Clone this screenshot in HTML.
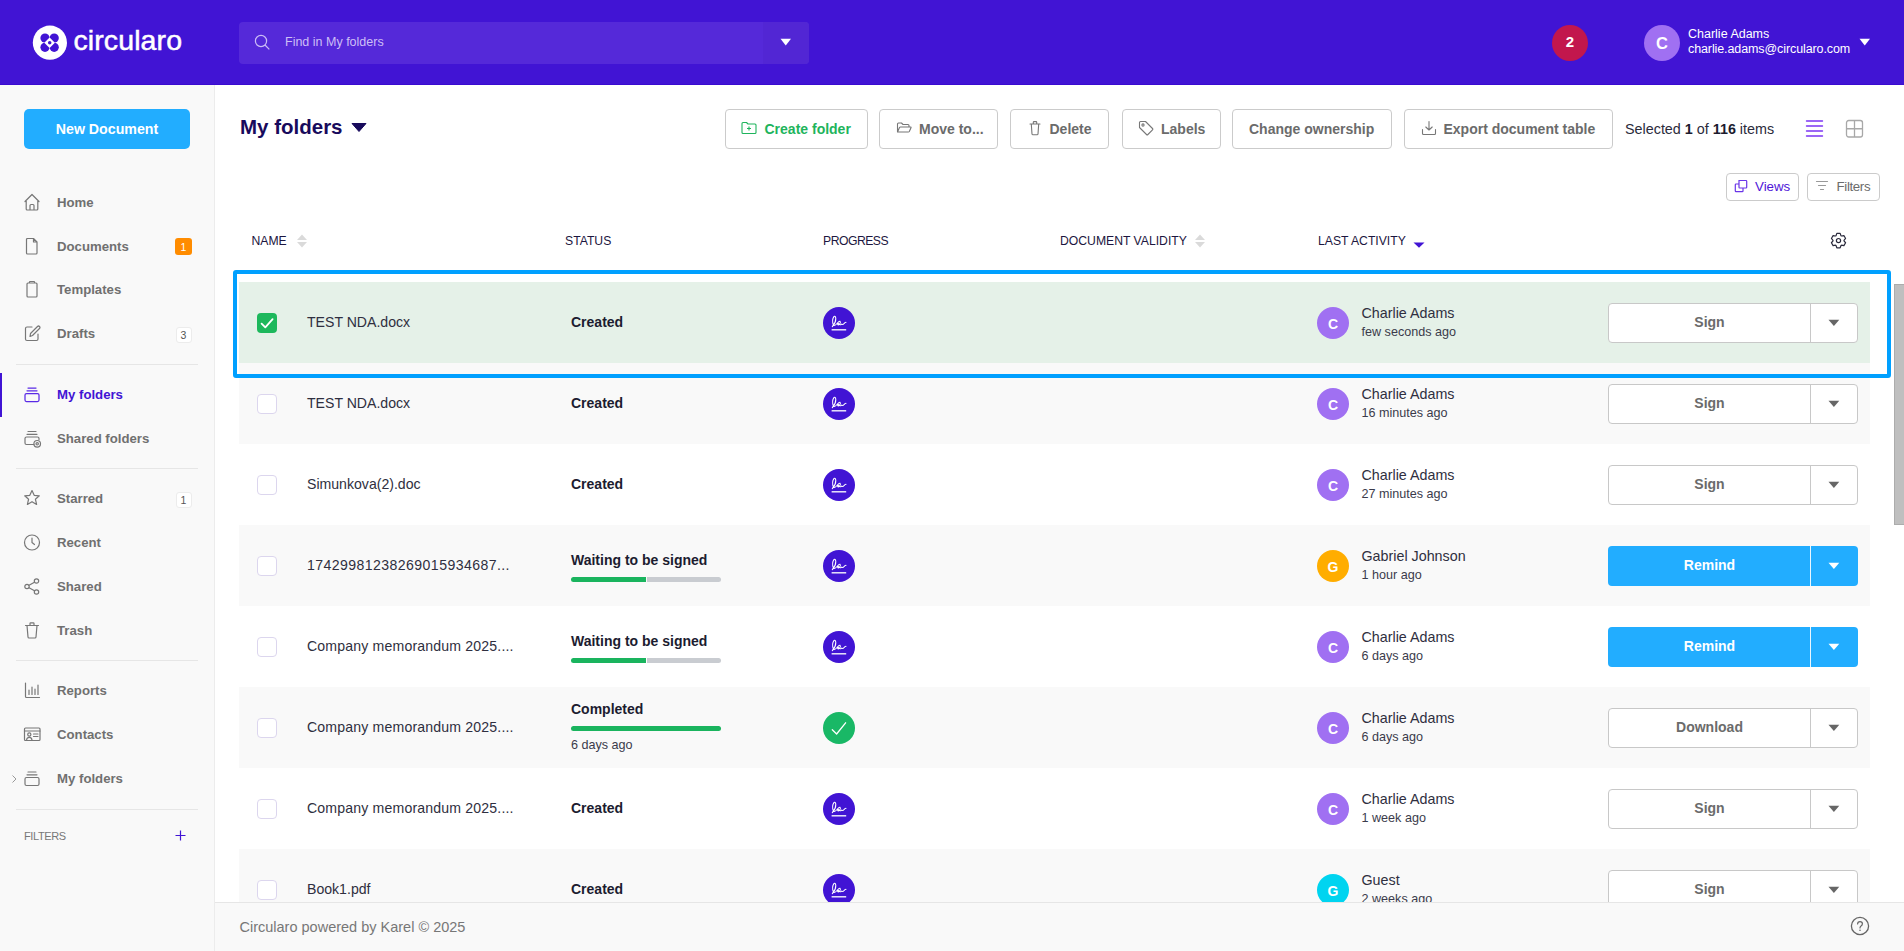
<!DOCTYPE html>
<html><head><meta charset="utf-8"><title>Circularo - My folders</title>
<style>
html,body{margin:0;padding:0;}
body{width:1904px;height:951px;overflow:hidden;position:relative;background:#fff;font-family:'Liberation Sans', sans-serif;}
.t{position:absolute;white-space:nowrap;line-height:1;}
svg{display:block;}
</style></head><body>
<div style="position:absolute;left:0px;top:0px;width:1904px;height:85px;background:#4114d4"></div>
<div style="position:absolute;left:0px;top:84px;width:1904px;height:1px;background:#3a0bd0"></div>
<svg style="position:absolute;left:30px;top:23px;" width="40" height="40" viewBox="0 0 40 40">
<circle cx="19.9" cy="19.7" r="17.1" fill="#fff"/>
<circle cx="15.0" cy="15.1" r="4.6" fill="#4114d4"/>
<circle cx="24.2" cy="15.1" r="4.6" fill="#4114d4"/>
<circle cx="15.0" cy="24.3" r="4.6" fill="#4114d4"/>
<circle cx="24.2" cy="24.3" r="4.6" fill="#4114d4"/>
<polygon points="19.6,14.4 14.3,19.7 19.6,25.0 24.9,19.7" fill="#fff"/>
<circle cx="19.7" cy="19.7" r="1.75" fill="#4114d4"/>
</svg>
<div class="t" style="left:73.50px;top:25.78px;font-size:28.5px;font-weight:400;color:#fff;letter-spacing:0.1px;-webkit-text-stroke:0.5px #fff">circularo</div>
<div style="position:absolute;left:239px;top:22px;width:570px;height:42px;background:#5529d9;border-radius:4px"></div>
<div style="position:absolute;left:763px;top:22px;width:46px;height:42px;background:#5226d4;border-radius:0 4px 4px 0"></div>
<svg style="position:absolute;left:253px;top:33px;" width="20" height="20" viewBox="0 0 20 20"><circle cx="8" cy="8" r="5.6" fill="none" stroke="#cbbcf6" stroke-width="1.2"/><line x1="12" y1="12" x2="16.3" y2="16.3" stroke="#cbbcf6" stroke-width="1.2"/></svg>
<div class="t" style="left:285.00px;top:36.38px;font-size:12.5px;font-weight:400;color:#cdbff6;">Find in My folders</div>
<svg style="position:absolute;left:780px;top:38px;" width="12" height="8" viewBox="0 0 12 8"><polygon points="0.5,0.8 11,0.8 5.75,7.4" fill="#fff"/></svg>
<div style="position:absolute;left:1552px;top:25px;width:36px;height:36px;background:#c2174d;border-radius:50%"></div>
<div class="t" style="left:1560.00px;width:20px;text-align:center;top:34.25px;font-size:15px;font-weight:700;color:#fff;">2</div>
<div style="position:absolute;left:1644px;top:25px;width:36px;height:36px;background:#a070f2;border-radius:50%"></div>
<div class="t" style="left:1652.00px;width:20px;text-align:center;top:34.98px;font-size:16.5px;font-weight:700;color:#fff;">C</div>
<div class="t" style="left:1688.00px;top:28.38px;font-size:12.5px;font-weight:400;color:#fff;">Charlie Adams</div>
<div class="t" style="left:1688.00px;top:43.38px;font-size:12.5px;font-weight:400;color:#fff;letter-spacing:-0.1px">charlie.adams@circularo.com</div>
<svg style="position:absolute;left:1859px;top:38px;" width="12" height="8" viewBox="0 0 12 8"><polygon points="0.5,0.8 11,0.8 5.75,7.4" fill="#fff"/></svg>
<div style="position:absolute;left:0px;top:85px;width:214px;height:866px;background:#f9f9f9"></div>
<div style="position:absolute;left:214px;top:85px;width:1px;height:866px;background:#ececec"></div>
<div style="position:absolute;left:24px;top:109px;width:166px;height:40px;background:#22adff;border-radius:5px"></div>
<div class="t" style="left:27.00px;width:160px;text-align:center;top:122.43px;font-size:14.2px;font-weight:700;color:#fff;">New Document</div>
<div class="t" style="left:57.00px;top:195.78px;font-size:13.2px;font-weight:700;color:#707070;">Home</div>
<svg style="position:absolute;left:22px;top:192px;" width="20" height="20" viewBox="0 0 20 20"><path d="M3 9.5 L10 2.5 L17 9.5 M4.2 8.3 V17 Q4.2 18 5.2 18 H14.8 Q15.8 18 15.8 17 V8.3 M8 18 V13.5 Q8 12.5 9 12.5 H11 Q12 12.5 12 13.5 V18" fill="none" stroke="#777" stroke-width="1.2" stroke-linejoin="round" stroke-linecap="round"/></svg>
<div class="t" style="left:57.00px;top:239.78px;font-size:13.2px;font-weight:700;color:#707070;">Documents</div>
<svg style="position:absolute;left:22px;top:236px;" width="20" height="20" viewBox="0 0 20 20"><path d="M5.5 2.5 H11.5 L15 6 V17 Q15 18 14 18 H5.5 Q4.5 18 4.5 17 V3.5 Q4.5 2.5 5.5 2.5 Z M11.5 2.5 V6 H15" fill="none" stroke="#777" stroke-width="1.2" stroke-linejoin="round" stroke-linecap="round"/></svg>
<div style="position:absolute;left:175px;top:238px;width:17px;height:17px;background:#ff8c00;border-radius:3px"></div>
<div class="t" style="left:177.50px;width:12px;text-align:center;top:242.07px;font-size:10.5px;font-weight:400;color:#fff;">1</div>
<div class="t" style="left:57.00px;top:282.78px;font-size:13.2px;font-weight:700;color:#707070;">Templates</div>
<svg style="position:absolute;left:22px;top:279px;" width="20" height="20" viewBox="0 0 20 20"><path d="M6 4 H14 Q15 4 15 5 V17 Q15 18 14 18 H6 Q5 18 5 17 V5 Q5 4 6 4 Z M7.5 4 V3 Q7.5 2.5 8 2.5 H12 Q12.5 2.5 12.5 3 V4" fill="none" stroke="#777" stroke-width="1.2" stroke-linejoin="round" stroke-linecap="round"/></svg>
<div class="t" style="left:57.00px;top:326.78px;font-size:13.2px;font-weight:700;color:#707070;">Drafts</div>
<svg style="position:absolute;left:22px;top:323px;" width="20" height="20" viewBox="0 0 20 20"><path d="M10 4 H5 Q3.5 4 3.5 5.5 V16 Q3.5 17.5 5 17.5 H14.5 Q16 17.5 16 16 V11 M8 13.5 L8.5 10.5 L15.5 3.5 Q16.5 2.5 17.5 3.5 Q18.5 4.5 17.5 5.5 L10.5 12.5 Z" fill="none" stroke="#777" stroke-width="1.2" stroke-linejoin="round" stroke-linecap="round"/></svg>
<div style="position:absolute;left:176px;top:327px;width:14px;height:14px;background:#fff;border:1px solid #ececec;border-radius:3px"></div>
<div class="t" style="left:177.50px;width:12px;text-align:center;top:329.57px;font-size:10.5px;font-weight:400;color:#555;">3</div>
<div style="position:absolute;left:16px;top:364px;width:182px;height:1px;background:#e6e6e6"></div>
<div style="position:absolute;left:0px;top:373px;width:2px;height:44px;background:#4114d4"></div>
<div class="t" style="left:57.00px;top:387.78px;font-size:13.2px;font-weight:700;color:#4114d4;">My folders</div>
<svg style="position:absolute;left:22px;top:384px;" width="20" height="20" viewBox="0 0 20 20"><path d="M6 4 H14 M5 6.8 H15 M4.5 9.5 H15.5 Q17 9.5 17 11 V16 Q17 17.5 15.5 17.5 H4.5 Q3 17.5 3 16 V11 Q3 9.5 4.5 9.5 Z" fill="none" stroke="#5a2ae6" stroke-width="1.25" stroke-linecap="round"/></svg>
<div class="t" style="left:57.00px;top:431.78px;font-size:13.2px;font-weight:700;color:#707070;">Shared folders</div>
<svg style="position:absolute;left:22px;top:428px;" width="20" height="20" viewBox="0 0 20 20"><path d="M6 3.5 H14 M5 6.3 H15 M12 16.5 H4.5 Q3 16.5 3 15 V10.5 Q3 9 4.5 9 H15.5 Q17 9 17 10.5 V11.5" fill="none" stroke="#777" stroke-width="1.2" stroke-linejoin="round" stroke-linecap="round"/><circle cx="15.2" cy="15.8" r="3.3" fill="none" stroke="#777" stroke-width="1.2" stroke-linejoin="round" stroke-linecap="round"/><circle cx="15.2" cy="15.8" r="1.2" fill="none" stroke="#777" stroke-width="1.2" stroke-linejoin="round" stroke-linecap="round"/></svg>
<div style="position:absolute;left:16px;top:468px;width:182px;height:1px;background:#e6e6e6"></div>
<div class="t" style="left:57.00px;top:491.78px;font-size:13.2px;font-weight:700;color:#707070;">Starred</div>
<svg style="position:absolute;left:22px;top:488px;" width="20" height="20" viewBox="0 0 20 20"><path d="M10 2.5 L12.2 7.3 L17.3 7.8 L13.4 11.2 L14.6 16.4 L10 13.7 L5.4 16.4 L6.6 11.2 L2.7 7.8 L7.8 7.3 Z" fill="none" stroke="#777" stroke-width="1.2" stroke-linejoin="round" stroke-linecap="round"/></svg>
<div style="position:absolute;left:176px;top:492px;width:14px;height:14px;background:#fff;border:1px solid #ececec;border-radius:3px"></div>
<div class="t" style="left:177.50px;width:12px;text-align:center;top:494.57px;font-size:10.5px;font-weight:400;color:#555;">1</div>
<div class="t" style="left:57.00px;top:535.78px;font-size:13.2px;font-weight:700;color:#707070;">Recent</div>
<svg style="position:absolute;left:22px;top:532px;" width="20" height="20" viewBox="0 0 20 20"><circle cx="10" cy="10.5" r="7.5" fill="none" stroke="#777" stroke-width="1.2" stroke-linejoin="round" stroke-linecap="round"/><path d="M10 6 V10.5 L12.5 12.5" fill="none" stroke="#777" stroke-width="1.2" stroke-linejoin="round" stroke-linecap="round"/></svg>
<div class="t" style="left:57.00px;top:579.78px;font-size:13.2px;font-weight:700;color:#707070;">Shared</div>
<svg style="position:absolute;left:22px;top:576px;" width="20" height="20" viewBox="0 0 20 20"><circle cx="5" cy="10.5" r="2.2" fill="none" stroke="#777" stroke-width="1.2" stroke-linejoin="round" stroke-linecap="round"/><circle cx="14.5" cy="5" r="2.2" fill="none" stroke="#777" stroke-width="1.2" stroke-linejoin="round" stroke-linecap="round"/><circle cx="14.5" cy="16" r="2.2" fill="none" stroke="#777" stroke-width="1.2" stroke-linejoin="round" stroke-linecap="round"/><path d="M7 9.3 L12.5 6.2 M7 11.7 L12.5 14.8" fill="none" stroke="#777" stroke-width="1.2" stroke-linejoin="round" stroke-linecap="round"/></svg>
<div class="t" style="left:57.00px;top:623.78px;font-size:13.2px;font-weight:700;color:#707070;">Trash</div>
<svg style="position:absolute;left:22px;top:620px;" width="20" height="20" viewBox="0 0 20 20"><path d="M3.5 5.5 H16.5 M5 5.5 L6 17 Q6.1 18 7 18 H13 Q13.9 18 14 17 L15 5.5 M8 5.5 V3.5 Q8 2.8 8.7 2.8 H11.3 Q12 2.8 12 3.5 V5.5" fill="none" stroke="#777" stroke-width="1.2" stroke-linejoin="round" stroke-linecap="round"/></svg>
<div style="position:absolute;left:16px;top:660px;width:182px;height:1px;background:#e6e6e6"></div>
<div class="t" style="left:57.00px;top:683.78px;font-size:13.2px;font-weight:700;color:#707070;">Reports</div>
<svg style="position:absolute;left:22px;top:680px;" width="20" height="20" viewBox="0 0 20 20"><path d="M3.5 3 V16.5 Q3.5 17.5 4.5 17.5 H17.5 M7 14.5 V10 M10 14.5 V7 M13 14.5 V9 M16 14.5 V5" fill="none" stroke="#777" stroke-width="1.2" stroke-linejoin="round" stroke-linecap="round"/></svg>
<div class="t" style="left:57.00px;top:727.78px;font-size:13.2px;font-weight:700;color:#707070;">Contacts</div>
<svg style="position:absolute;left:22px;top:724px;" width="20" height="20" viewBox="0 0 20 20"><rect x="2.5" y="4" width="15.5" height="12.5" rx="1" fill="none" stroke="#777" stroke-width="1.2" stroke-linejoin="round" stroke-linecap="round"/><path d="M2.5 7 H18" fill="none" stroke="#777" stroke-width="1.2" stroke-linejoin="round" stroke-linecap="round"/><circle cx="7.3" cy="10.5" r="1.6" fill="none" stroke="#777" stroke-width="1.2" stroke-linejoin="round" stroke-linecap="round"/><path d="M4.5 16 Q5 13.3 7.3 13.3 Q9.6 13.3 10 16 M11.5 10 H16 M11.5 12.5 H16" fill="none" stroke="#777" stroke-width="1.2" stroke-linejoin="round" stroke-linecap="round"/></svg>
<div class="t" style="left:57.00px;top:771.78px;font-size:13.2px;font-weight:700;color:#707070;">My folders</div>
<svg style="position:absolute;left:22px;top:768px;" width="20" height="20" viewBox="0 0 20 20"><path d="M6 4 H14 M5 6.8 H15 M4.5 9.5 H15.5 Q17 9.5 17 11 V16 Q17 17.5 15.5 17.5 H4.5 Q3 17.5 3 16 V11 Q3 9.5 4.5 9.5 Z" fill="none" stroke="#777" stroke-width="1.2" stroke-linecap="round"/></svg>
<svg style="position:absolute;left:10px;top:774px;" width="8" height="10" viewBox="0 0 8 10"><path d="M2.5 1.5 L6 5 L2.5 8.5" fill="none" stroke="#999" stroke-width="1"/></svg>
<div style="position:absolute;left:16px;top:809px;width:182px;height:1px;background:#e6e6e6"></div>
<div class="t" style="left:24.00px;top:830.65px;font-size:11px;font-weight:400;color:#777;letter-spacing:-0.4px">FILTERS</div>
<svg style="position:absolute;left:174px;top:829px;" width="13" height="13" viewBox="0 0 13 13"><path d="M6.5 1.5 V11.5 M1.5 6.5 H11.5" stroke="#4114d4" stroke-width="1.2"/></svg>
<div class="t" style="left:240.00px;top:116.58px;font-size:20.5px;font-weight:700;color:#180a5c;">My folders</div>
<svg style="position:absolute;left:351px;top:122px;" width="16" height="11" viewBox="0 0 16 11"><polygon points="1,1.5 15,1.5 8,9.5" fill="#180a5c" stroke="#180a5c" stroke-width="1" stroke-linejoin="round"/></svg>
<div style="position:absolute;left:725px;top:109px;width:141px;height:38px;border:1px solid #cbcbcb;border-radius:4px;background:#fff"></div>
<div class="t" style="left:764.50px;top:122.10px;font-size:14px;font-weight:700;color:#1eb45c;">Create folder</div>
<svg style="position:absolute;left:740px;top:119px;" width="18" height="18" viewBox="0 0 18 18"><path d="M2 4.5 Q2 3.5 3 3.5 H6.5 L8 5 H15 Q16 5 16 6 V13.5 Q16 14.5 15 14.5 H3 Q2 14.5 2 13.5 Z M9 7.5 V11.5 M7 9.5 H11" fill="none" stroke="#1eb45c" stroke-width="1.1" stroke-linejoin="round"/></svg>
<div style="position:absolute;left:879px;top:109px;width:117px;height:38px;border:1px solid #cbcbcb;border-radius:4px;background:#fff"></div>
<div class="t" style="left:919.00px;top:122.10px;font-size:14px;font-weight:700;color:#6b6b6b;">Move to...</div>
<svg style="position:absolute;left:895px;top:119px;" width="18" height="18" viewBox="0 0 18 18"><path d="M2.5 13 V5 Q2.5 4 3.5 4 H6.5 L8 5.5 H13 Q14 5.5 14 6.5 V8 M2.5 13 L4.5 8.5 Q4.8 8 5.5 8 H15.5 Q16.3 8 16 8.7 L14.3 12.5 Q14 13 13.3 13 Z" fill="none" stroke="#777" stroke-width="1.1" stroke-linejoin="round" stroke-linecap="round"/></svg>
<div style="position:absolute;left:1010px;top:109px;width:97px;height:38px;border:1px solid #cbcbcb;border-radius:4px;background:#fff"></div>
<div class="t" style="left:1049.50px;top:122.10px;font-size:14px;font-weight:700;color:#6b6b6b;">Delete</div>
<svg style="position:absolute;left:1026px;top:119px;" width="18" height="18" viewBox="0 0 18 18"><path d="M4 5 H14 M5.3 5 L6 15 Q6.1 15.8 7 15.8 H11 Q11.9 15.8 12 15 L12.7 5 M7.3 5 V3.3 Q7.3 2.6 8 2.6 H10 Q10.7 2.6 10.7 3.3 V5" fill="none" stroke="#777" stroke-width="1.1" stroke-linejoin="round" stroke-linecap="round"/></svg>
<div style="position:absolute;left:1122px;top:109px;width:97px;height:38px;border:1px solid #cbcbcb;border-radius:4px;background:#fff"></div>
<div class="t" style="left:1161.00px;top:122.10px;font-size:14px;font-weight:700;color:#6b6b6b;">Labels</div>
<svg style="position:absolute;left:1137px;top:119px;" width="18" height="18" viewBox="0 0 18 18"><path d="M2.5 3.5 Q2.5 2.5 3.5 2.5 H8.5 L15.5 9.5 Q16.2 10.2 15.5 10.9 L10.9 15.5 Q10.2 16.2 9.5 15.5 L2.5 8.5 Z" fill="none" stroke="#777" stroke-width="1.1" stroke-linejoin="round" stroke-linecap="round"/><circle cx="6" cy="6" r="1.1" fill="none" stroke="#777" stroke-width="1.1" stroke-linejoin="round" stroke-linecap="round"/></svg>
<div style="position:absolute;left:1232px;top:109px;width:158px;height:38px;border:1px solid #cbcbcb;border-radius:4px;background:#fff"></div>
<div class="t" style="left:1249.00px;top:122.10px;font-size:14px;font-weight:700;color:#6b6b6b;">Change ownership</div>
<svg style="position:absolute;left:0px;top:119px;" width="18" height="18" viewBox="0 0 18 18"></svg>
<div style="position:absolute;left:1404px;top:109px;width:207px;height:38px;border:1px solid #cbcbcb;border-radius:4px;background:#fff"></div>
<div class="t" style="left:1443.50px;top:122.10px;font-size:14px;font-weight:700;color:#6b6b6b;">Export document table</div>
<svg style="position:absolute;left:1420px;top:119px;" width="18" height="18" viewBox="0 0 18 18"><path d="M9 2.5 V11 M5.8 8 L9 11 L12.2 8 M2.5 10.5 V14.5 Q2.5 15.5 3.5 15.5 H14.5 Q15.5 15.5 15.5 14.5 V10.5" fill="none" stroke="#777" stroke-width="1.1" stroke-linejoin="round" stroke-linecap="round"/></svg>
<div class="t" style="left:1625px;top:122.10px;font-size:14.35px;color:#2b2b3b">Selected <b style="color:#1c1c2e">1</b> of <b style="color:#1c1c2e">116</b> items</div>
<svg style="position:absolute;left:1804px;top:118px;" width="20" height="20" viewBox="0 0 20 20"><path d="M2.5 3 H18.5 M2.5 8 H18.5 M2.5 13 H18.5 M2.5 18 H18.5" stroke="#7b35f2" stroke-width="1.4" stroke-linecap="round"/></svg>
<svg style="position:absolute;left:1844px;top:118px;" width="20" height="20" viewBox="0 0 20 20"><rect x="2.5" y="2.5" width="16" height="16.5" rx="2.2" fill="none" stroke="#a8a8a8" stroke-width="1.3"/><path d="M10.5 2.5 V19 M2.5 10.75 H18.5" stroke="#a8a8a8" stroke-width="1.3"/></svg>
<div style="position:absolute;left:1726px;top:173px;width:71px;height:26px;border:1px solid #cbcbcb;border-radius:4px;background:#fff"></div>
<svg style="position:absolute;left:1733px;top:178px;" width="16" height="16" viewBox="0 0 16 16"><path d="M6 2.5 H13 Q13.7 2.5 13.7 3.2 V9.3 Q13.7 10 13 10 H6.7 Q6 10 6 9.3 Z M6 6 H3 Q2.3 6 2.3 6.7 V13 Q2.3 13.7 3 13.7 H9.3 Q10 13.7 10 13 V10" fill="none" stroke="#6a35e8" stroke-width="1.2"/></svg>
<div class="t" style="left:1755.00px;top:179.69px;font-size:13.3px;font-weight:400;color:#5016d8;">Views</div>
<div style="position:absolute;left:1807px;top:173px;width:71px;height:26px;border:1px solid #cbcbcb;border-radius:4px;background:#fff"></div>
<svg style="position:absolute;left:1814px;top:178px;" width="16" height="16" viewBox="0 0 16 16"><path d="M2.5 3.5 H13.5 M4.5 7.5 H11.5 M6.5 11.5 H9.5" stroke="#999" stroke-width="1.2" stroke-linecap="round"/></svg>
<div class="t" style="left:1836.50px;top:179.69px;font-size:13.3px;font-weight:400;color:#6b6b6b;letter-spacing:-0.35px">Filters</div>
<div class="t" style="left:251.50px;top:234.63px;font-size:12.2px;font-weight:400;color:#1c1640;">NAME</div>
<div class="t" style="left:565.00px;top:234.63px;font-size:12.2px;font-weight:400;color:#1c1640;">STATUS</div>
<div class="t" style="left:823.00px;top:234.63px;font-size:12.2px;font-weight:400;color:#1c1640;letter-spacing:-0.5px">PROGRESS</div>
<div class="t" style="left:1060.00px;top:234.63px;font-size:12.2px;font-weight:400;color:#1c1640;">DOCUMENT VALIDITY</div>
<div class="t" style="left:1318.00px;top:234.63px;font-size:12.2px;font-weight:400;color:#1c1640;">LAST ACTIVITY</div>
<svg style="position:absolute;left:297px;top:234px;" width="10" height="14" viewBox="0 0 10 14"><polygon points="5,0.5 10,6 0,6" fill="#dadada"/><polygon points="0,8 10,8 5,13.5" fill="#dadada"/></svg>
<svg style="position:absolute;left:1195px;top:234px;" width="10" height="14" viewBox="0 0 10 14"><polygon points="5,0.5 10,6 0,6" fill="#dadada"/><polygon points="0,8 10,8 5,13.5" fill="#dadada"/></svg>
<svg style="position:absolute;left:1413px;top:242px;" width="12" height="6" viewBox="0 0 12 6"><polygon points="0.5,0.5 11.5,0.5 6,5.8" fill="#4114d4"/></svg>
<svg style="position:absolute;left:1830px;top:232px;" width="17" height="17" viewBox="0 0 17 17"><path d="M6.00 3.70 L6.84 1.39 L10.16 1.39 L11.00 3.70 L11.50 3.99 L13.91 3.55 L15.58 6.44 L13.99 8.31 L13.99 8.89 L15.58 10.76 L13.91 13.65 L11.50 13.21 L11.00 13.50 L10.16 15.81 L6.84 15.81 L6.00 13.50 L5.50 13.21 L3.09 13.65 L1.42 10.76 L3.01 8.89 L3.01 8.31 L1.42 6.44 L3.09 3.55 L5.50 3.99 Z" fill="none" stroke="#2a2a3c" stroke-width="1.2" stroke-linejoin="round"/><circle cx="8.5" cy="8.6" r="2.1" fill="none" stroke="#2a2a3c" stroke-width="1.2"/></svg>
<div style="position:absolute;left:239px;top:282px;width:1631px;height:81px;background:#e5f1e8"></div>
<div style="position:absolute;left:257px;top:313px;width:20px;height:20px;background:#1db85c;border-radius:4px"></div>
<svg style="position:absolute;left:257px;top:313px;" width="20" height="20" viewBox="0 0 20 20"><path d="M4.6 10.6 L8.3 14.3 L15.6 6.2" fill="none" stroke="#fff" stroke-width="1.8" stroke-linecap="round" stroke-linejoin="round"/></svg>
<div class="t" style="left:307.00px;top:315.01px;font-size:14.1px;font-weight:400;color:#2f2f40;">TEST NDA.docx</div>
<div class="t" style="left:571.00px;top:315.10px;font-size:14px;font-weight:700;color:#1c1c30;">Created</div>
<div style="position:absolute;left:823px;top:307px;width:32px;height:32px;background:#4114d4;border-radius:50%"></div>
<svg style="position:absolute;left:823px;top:307px;" width="32" height="32" viewBox="0 0 32 32"><path d="M9.3 19.7 C10.8 18.0 12.9 14.5 12.8 11.5 C12.7 9.5 11.6 8.6 10.9 9.6 C9.6 11.5 9.4 15.5 10.5 18.2 C11.3 19.0 12.6 18.0 13.6 17.0 C14.6 16.0 16.0 13.6 17.0 14.3 C17.9 15.0 17.0 17.2 15.8 17.8 C14.6 18.2 14.2 16.8 15.2 16.4 C16.6 17.8 18.0 18.2 18.8 17.0 C19.4 17.8 20.4 17.6 21.0 16.6 C21.6 15.8 22.3 15.3 23.0 15.2" fill="none" stroke="#fff" stroke-width="1.05" stroke-linecap="round" stroke-linejoin="round"/><path d="M8.6 22.8 H23.2" stroke="#fff" stroke-width="1.4" opacity="0.95"/></svg>
<div style="position:absolute;left:1317px;top:307px;width:32px;height:32px;background:#a070f2;border-radius:50%"></div>
<div class="t" style="left:1323.00px;width:20px;text-align:center;top:316.60px;font-size:14px;font-weight:700;color:#fff;">C</div>
<div class="t" style="left:1361.50px;top:305.85px;font-size:14.3px;font-weight:400;color:#2f2f40;">Charlie Adams</div>
<div class="t" style="left:1361.50px;top:325.79px;font-size:12.6px;font-weight:400;color:#3b3b4b;">few seconds ago</div>
<div style="position:absolute;left:1608px;top:303px;width:248px;height:38px;background:#fff;border:1px solid #c8c8c8;border-radius:4px"></div>
<div style="position:absolute;left:1810px;top:303px;width:1px;height:40px;background:#c8c8c8"></div>
<div class="t" style="left:1649.50px;width:120px;text-align:center;top:315.10px;font-size:14px;font-weight:700;color:#6b6b6b;">Sign</div>
<svg style="position:absolute;left:1828px;top:319px;" width="12" height="8" viewBox="0 0 12 8"><polygon points="0.5,0.8 11.3,0.8 5.9,6.9" fill="#666"/></svg>
<div style="position:absolute;left:239px;top:363px;width:1631px;height:81px;background:#f9f9f9"></div>
<div style="position:absolute;left:257px;top:394px;width:18px;height:18px;background:#fff;border:1px solid #dcd6ee;border-radius:4px"></div>
<div class="t" style="left:307.00px;top:396.01px;font-size:14.1px;font-weight:400;color:#2f2f40;">TEST NDA.docx</div>
<div class="t" style="left:571.00px;top:396.10px;font-size:14px;font-weight:700;color:#1c1c30;">Created</div>
<div style="position:absolute;left:823px;top:388px;width:32px;height:32px;background:#4114d4;border-radius:50%"></div>
<svg style="position:absolute;left:823px;top:388px;" width="32" height="32" viewBox="0 0 32 32"><path d="M9.3 19.7 C10.8 18.0 12.9 14.5 12.8 11.5 C12.7 9.5 11.6 8.6 10.9 9.6 C9.6 11.5 9.4 15.5 10.5 18.2 C11.3 19.0 12.6 18.0 13.6 17.0 C14.6 16.0 16.0 13.6 17.0 14.3 C17.9 15.0 17.0 17.2 15.8 17.8 C14.6 18.2 14.2 16.8 15.2 16.4 C16.6 17.8 18.0 18.2 18.8 17.0 C19.4 17.8 20.4 17.6 21.0 16.6 C21.6 15.8 22.3 15.3 23.0 15.2" fill="none" stroke="#fff" stroke-width="1.05" stroke-linecap="round" stroke-linejoin="round"/><path d="M8.6 22.8 H23.2" stroke="#fff" stroke-width="1.4" opacity="0.95"/></svg>
<div style="position:absolute;left:1317px;top:388px;width:32px;height:32px;background:#a070f2;border-radius:50%"></div>
<div class="t" style="left:1323.00px;width:20px;text-align:center;top:397.60px;font-size:14px;font-weight:700;color:#fff;">C</div>
<div class="t" style="left:1361.50px;top:386.85px;font-size:14.3px;font-weight:400;color:#2f2f40;">Charlie Adams</div>
<div class="t" style="left:1361.50px;top:406.79px;font-size:12.6px;font-weight:400;color:#3b3b4b;">16 minutes ago</div>
<div style="position:absolute;left:1608px;top:384px;width:248px;height:38px;background:#fff;border:1px solid #c8c8c8;border-radius:4px"></div>
<div style="position:absolute;left:1810px;top:384px;width:1px;height:40px;background:#c8c8c8"></div>
<div class="t" style="left:1649.50px;width:120px;text-align:center;top:396.10px;font-size:14px;font-weight:700;color:#6b6b6b;">Sign</div>
<svg style="position:absolute;left:1828px;top:400px;" width="12" height="8" viewBox="0 0 12 8"><polygon points="0.5,0.8 11.3,0.8 5.9,6.9" fill="#666"/></svg>
<div style="position:absolute;left:239px;top:444px;width:1631px;height:81px;background:#ffffff"></div>
<div style="position:absolute;left:257px;top:475px;width:18px;height:18px;background:#fff;border:1px solid #dcd6ee;border-radius:4px"></div>
<div class="t" style="left:307.00px;top:477.01px;font-size:14.1px;font-weight:400;color:#2f2f40;">Simunkova(2).doc</div>
<div class="t" style="left:571.00px;top:477.10px;font-size:14px;font-weight:700;color:#1c1c30;">Created</div>
<div style="position:absolute;left:823px;top:469px;width:32px;height:32px;background:#4114d4;border-radius:50%"></div>
<svg style="position:absolute;left:823px;top:469px;" width="32" height="32" viewBox="0 0 32 32"><path d="M9.3 19.7 C10.8 18.0 12.9 14.5 12.8 11.5 C12.7 9.5 11.6 8.6 10.9 9.6 C9.6 11.5 9.4 15.5 10.5 18.2 C11.3 19.0 12.6 18.0 13.6 17.0 C14.6 16.0 16.0 13.6 17.0 14.3 C17.9 15.0 17.0 17.2 15.8 17.8 C14.6 18.2 14.2 16.8 15.2 16.4 C16.6 17.8 18.0 18.2 18.8 17.0 C19.4 17.8 20.4 17.6 21.0 16.6 C21.6 15.8 22.3 15.3 23.0 15.2" fill="none" stroke="#fff" stroke-width="1.05" stroke-linecap="round" stroke-linejoin="round"/><path d="M8.6 22.8 H23.2" stroke="#fff" stroke-width="1.4" opacity="0.95"/></svg>
<div style="position:absolute;left:1317px;top:469px;width:32px;height:32px;background:#a070f2;border-radius:50%"></div>
<div class="t" style="left:1323.00px;width:20px;text-align:center;top:478.60px;font-size:14px;font-weight:700;color:#fff;">C</div>
<div class="t" style="left:1361.50px;top:467.85px;font-size:14.3px;font-weight:400;color:#2f2f40;">Charlie Adams</div>
<div class="t" style="left:1361.50px;top:487.79px;font-size:12.6px;font-weight:400;color:#3b3b4b;">27 minutes ago</div>
<div style="position:absolute;left:1608px;top:465px;width:248px;height:38px;background:#fff;border:1px solid #c8c8c8;border-radius:4px"></div>
<div style="position:absolute;left:1810px;top:465px;width:1px;height:40px;background:#c8c8c8"></div>
<div class="t" style="left:1649.50px;width:120px;text-align:center;top:477.10px;font-size:14px;font-weight:700;color:#6b6b6b;">Sign</div>
<svg style="position:absolute;left:1828px;top:481px;" width="12" height="8" viewBox="0 0 12 8"><polygon points="0.5,0.8 11.3,0.8 5.9,6.9" fill="#666"/></svg>
<div style="position:absolute;left:239px;top:525px;width:1631px;height:81px;background:#f9f9f9"></div>
<div style="position:absolute;left:257px;top:556px;width:18px;height:18px;background:#fff;border:1px solid #dcd6ee;border-radius:4px"></div>
<div class="t" style="left:307.00px;top:558.01px;font-size:14.1px;font-weight:400;color:#2f2f40;letter-spacing:0.42px">17429981238269015934687...</div>
<div class="t" style="left:571.00px;top:553.10px;font-size:14px;font-weight:700;color:#1c1c30;">Waiting to be signed</div>
<div style="position:absolute;left:571px;top:577px;width:75px;height:5px;background:#1ab45e;border-radius:3px 0 0 3px"></div>
<div style="position:absolute;left:647px;top:577px;width:74px;height:5px;background:#c9ccd1;border-radius:0 3px 3px 0"></div>
<div style="position:absolute;left:823px;top:550px;width:32px;height:32px;background:#4114d4;border-radius:50%"></div>
<svg style="position:absolute;left:823px;top:550px;" width="32" height="32" viewBox="0 0 32 32"><path d="M9.3 19.7 C10.8 18.0 12.9 14.5 12.8 11.5 C12.7 9.5 11.6 8.6 10.9 9.6 C9.6 11.5 9.4 15.5 10.5 18.2 C11.3 19.0 12.6 18.0 13.6 17.0 C14.6 16.0 16.0 13.6 17.0 14.3 C17.9 15.0 17.0 17.2 15.8 17.8 C14.6 18.2 14.2 16.8 15.2 16.4 C16.6 17.8 18.0 18.2 18.8 17.0 C19.4 17.8 20.4 17.6 21.0 16.6 C21.6 15.8 22.3 15.3 23.0 15.2" fill="none" stroke="#fff" stroke-width="1.05" stroke-linecap="round" stroke-linejoin="round"/><path d="M8.6 22.8 H23.2" stroke="#fff" stroke-width="1.4" opacity="0.95"/></svg>
<div style="position:absolute;left:1317px;top:550px;width:32px;height:32px;background:#ffad00;border-radius:50%"></div>
<div class="t" style="left:1323.00px;width:20px;text-align:center;top:559.60px;font-size:14px;font-weight:700;color:#fff;">G</div>
<div class="t" style="left:1361.50px;top:548.85px;font-size:14.3px;font-weight:400;color:#2f2f40;">Gabriel Johnson</div>
<div class="t" style="left:1361.50px;top:568.79px;font-size:12.6px;font-weight:400;color:#3b3b4b;">1 hour ago</div>
<div style="position:absolute;left:1608px;top:546px;width:250px;height:40px;background:#22adff;border-radius:4px"></div>
<div style="position:absolute;left:1810px;top:546px;width:1px;height:40px;background:#e8f6ff"></div>
<div class="t" style="left:1649.50px;width:120px;text-align:center;top:558.10px;font-size:14px;font-weight:700;color:#fff;">Remind</div>
<svg style="position:absolute;left:1828px;top:562px;" width="12" height="8" viewBox="0 0 12 8"><polygon points="0.5,0.8 11.3,0.8 5.9,6.9" fill="#fff"/></svg>
<div style="position:absolute;left:239px;top:606px;width:1631px;height:81px;background:#ffffff"></div>
<div style="position:absolute;left:257px;top:637px;width:18px;height:18px;background:#fff;border:1px solid #dcd6ee;border-radius:4px"></div>
<div class="t" style="left:307.00px;top:639.01px;font-size:14.1px;font-weight:400;color:#2f2f40;letter-spacing:0.17px">Company memorandum 2025....</div>
<div class="t" style="left:571.00px;top:634.10px;font-size:14px;font-weight:700;color:#1c1c30;">Waiting to be signed</div>
<div style="position:absolute;left:571px;top:658px;width:75px;height:5px;background:#1ab45e;border-radius:3px 0 0 3px"></div>
<div style="position:absolute;left:647px;top:658px;width:74px;height:5px;background:#c9ccd1;border-radius:0 3px 3px 0"></div>
<div style="position:absolute;left:823px;top:631px;width:32px;height:32px;background:#4114d4;border-radius:50%"></div>
<svg style="position:absolute;left:823px;top:631px;" width="32" height="32" viewBox="0 0 32 32"><path d="M9.3 19.7 C10.8 18.0 12.9 14.5 12.8 11.5 C12.7 9.5 11.6 8.6 10.9 9.6 C9.6 11.5 9.4 15.5 10.5 18.2 C11.3 19.0 12.6 18.0 13.6 17.0 C14.6 16.0 16.0 13.6 17.0 14.3 C17.9 15.0 17.0 17.2 15.8 17.8 C14.6 18.2 14.2 16.8 15.2 16.4 C16.6 17.8 18.0 18.2 18.8 17.0 C19.4 17.8 20.4 17.6 21.0 16.6 C21.6 15.8 22.3 15.3 23.0 15.2" fill="none" stroke="#fff" stroke-width="1.05" stroke-linecap="round" stroke-linejoin="round"/><path d="M8.6 22.8 H23.2" stroke="#fff" stroke-width="1.4" opacity="0.95"/></svg>
<div style="position:absolute;left:1317px;top:631px;width:32px;height:32px;background:#a070f2;border-radius:50%"></div>
<div class="t" style="left:1323.00px;width:20px;text-align:center;top:640.60px;font-size:14px;font-weight:700;color:#fff;">C</div>
<div class="t" style="left:1361.50px;top:629.85px;font-size:14.3px;font-weight:400;color:#2f2f40;">Charlie Adams</div>
<div class="t" style="left:1361.50px;top:649.79px;font-size:12.6px;font-weight:400;color:#3b3b4b;">6 days ago</div>
<div style="position:absolute;left:1608px;top:627px;width:250px;height:40px;background:#22adff;border-radius:4px"></div>
<div style="position:absolute;left:1810px;top:627px;width:1px;height:40px;background:#e8f6ff"></div>
<div class="t" style="left:1649.50px;width:120px;text-align:center;top:639.10px;font-size:14px;font-weight:700;color:#fff;">Remind</div>
<svg style="position:absolute;left:1828px;top:643px;" width="12" height="8" viewBox="0 0 12 8"><polygon points="0.5,0.8 11.3,0.8 5.9,6.9" fill="#fff"/></svg>
<div style="position:absolute;left:239px;top:687px;width:1631px;height:81px;background:#f9f9f9"></div>
<div style="position:absolute;left:257px;top:718px;width:18px;height:18px;background:#fff;border:1px solid #dcd6ee;border-radius:4px"></div>
<div class="t" style="left:307.00px;top:720.01px;font-size:14.1px;font-weight:400;color:#2f2f40;letter-spacing:0.17px">Company memorandum 2025....</div>
<div class="t" style="left:571.00px;top:702.10px;font-size:14px;font-weight:700;color:#1c1c30;">Completed</div>
<div style="position:absolute;left:571px;top:726px;width:150px;height:5px;background:#1ab45e;border-radius:3px"></div>
<div class="t" style="left:571.00px;top:739.29px;font-size:12.6px;font-weight:400;color:#3b3b4b;">6 days ago</div>
<div style="position:absolute;left:823px;top:712px;width:32px;height:32px;background:#19b866;border-radius:50%"></div>
<svg style="position:absolute;left:823px;top:712px;" width="32" height="32" viewBox="0 0 32 32"><path d="M9.3 17.8 L13.6 22 L22.6 10.8" fill="none" stroke="#fff" stroke-width="1.3" stroke-linecap="round" stroke-linejoin="round"/></svg>
<div style="position:absolute;left:1317px;top:712px;width:32px;height:32px;background:#a070f2;border-radius:50%"></div>
<div class="t" style="left:1323.00px;width:20px;text-align:center;top:721.60px;font-size:14px;font-weight:700;color:#fff;">C</div>
<div class="t" style="left:1361.50px;top:710.85px;font-size:14.3px;font-weight:400;color:#2f2f40;">Charlie Adams</div>
<div class="t" style="left:1361.50px;top:730.79px;font-size:12.6px;font-weight:400;color:#3b3b4b;">6 days ago</div>
<div style="position:absolute;left:1608px;top:708px;width:248px;height:38px;background:#fff;border:1px solid #c8c8c8;border-radius:4px"></div>
<div style="position:absolute;left:1810px;top:708px;width:1px;height:40px;background:#c8c8c8"></div>
<div class="t" style="left:1649.50px;width:120px;text-align:center;top:720.10px;font-size:14px;font-weight:700;color:#6b6b6b;">Download</div>
<svg style="position:absolute;left:1828px;top:724px;" width="12" height="8" viewBox="0 0 12 8"><polygon points="0.5,0.8 11.3,0.8 5.9,6.9" fill="#666"/></svg>
<div style="position:absolute;left:239px;top:768px;width:1631px;height:81px;background:#ffffff"></div>
<div style="position:absolute;left:257px;top:799px;width:18px;height:18px;background:#fff;border:1px solid #dcd6ee;border-radius:4px"></div>
<div class="t" style="left:307.00px;top:801.01px;font-size:14.1px;font-weight:400;color:#2f2f40;letter-spacing:0.17px">Company memorandum 2025....</div>
<div class="t" style="left:571.00px;top:801.10px;font-size:14px;font-weight:700;color:#1c1c30;">Created</div>
<div style="position:absolute;left:823px;top:793px;width:32px;height:32px;background:#4114d4;border-radius:50%"></div>
<svg style="position:absolute;left:823px;top:793px;" width="32" height="32" viewBox="0 0 32 32"><path d="M9.3 19.7 C10.8 18.0 12.9 14.5 12.8 11.5 C12.7 9.5 11.6 8.6 10.9 9.6 C9.6 11.5 9.4 15.5 10.5 18.2 C11.3 19.0 12.6 18.0 13.6 17.0 C14.6 16.0 16.0 13.6 17.0 14.3 C17.9 15.0 17.0 17.2 15.8 17.8 C14.6 18.2 14.2 16.8 15.2 16.4 C16.6 17.8 18.0 18.2 18.8 17.0 C19.4 17.8 20.4 17.6 21.0 16.6 C21.6 15.8 22.3 15.3 23.0 15.2" fill="none" stroke="#fff" stroke-width="1.05" stroke-linecap="round" stroke-linejoin="round"/><path d="M8.6 22.8 H23.2" stroke="#fff" stroke-width="1.4" opacity="0.95"/></svg>
<div style="position:absolute;left:1317px;top:793px;width:32px;height:32px;background:#a070f2;border-radius:50%"></div>
<div class="t" style="left:1323.00px;width:20px;text-align:center;top:802.60px;font-size:14px;font-weight:700;color:#fff;">C</div>
<div class="t" style="left:1361.50px;top:791.85px;font-size:14.3px;font-weight:400;color:#2f2f40;">Charlie Adams</div>
<div class="t" style="left:1361.50px;top:811.79px;font-size:12.6px;font-weight:400;color:#3b3b4b;">1 week ago</div>
<div style="position:absolute;left:1608px;top:789px;width:248px;height:38px;background:#fff;border:1px solid #c8c8c8;border-radius:4px"></div>
<div style="position:absolute;left:1810px;top:789px;width:1px;height:40px;background:#c8c8c8"></div>
<div class="t" style="left:1649.50px;width:120px;text-align:center;top:801.10px;font-size:14px;font-weight:700;color:#6b6b6b;">Sign</div>
<svg style="position:absolute;left:1828px;top:805px;" width="12" height="8" viewBox="0 0 12 8"><polygon points="0.5,0.8 11.3,0.8 5.9,6.9" fill="#666"/></svg>
<div style="position:absolute;left:239px;top:849px;width:1631px;height:81px;background:#f9f9f9"></div>
<div style="position:absolute;left:257px;top:880px;width:18px;height:18px;background:#fff;border:1px solid #dcd6ee;border-radius:4px"></div>
<div class="t" style="left:307.00px;top:882.01px;font-size:14.1px;font-weight:400;color:#2f2f40;">Book1.pdf</div>
<div class="t" style="left:571.00px;top:882.10px;font-size:14px;font-weight:700;color:#1c1c30;">Created</div>
<div style="position:absolute;left:823px;top:874px;width:32px;height:32px;background:#4114d4;border-radius:50%"></div>
<svg style="position:absolute;left:823px;top:874px;" width="32" height="32" viewBox="0 0 32 32"><path d="M9.3 19.7 C10.8 18.0 12.9 14.5 12.8 11.5 C12.7 9.5 11.6 8.6 10.9 9.6 C9.6 11.5 9.4 15.5 10.5 18.2 C11.3 19.0 12.6 18.0 13.6 17.0 C14.6 16.0 16.0 13.6 17.0 14.3 C17.9 15.0 17.0 17.2 15.8 17.8 C14.6 18.2 14.2 16.8 15.2 16.4 C16.6 17.8 18.0 18.2 18.8 17.0 C19.4 17.8 20.4 17.6 21.0 16.6 C21.6 15.8 22.3 15.3 23.0 15.2" fill="none" stroke="#fff" stroke-width="1.05" stroke-linecap="round" stroke-linejoin="round"/><path d="M8.6 22.8 H23.2" stroke="#fff" stroke-width="1.4" opacity="0.95"/></svg>
<div style="position:absolute;left:1317px;top:874px;width:32px;height:32px;background:#00d4f0;border-radius:50%"></div>
<div class="t" style="left:1323.00px;width:20px;text-align:center;top:883.60px;font-size:14px;font-weight:700;color:#fff;">G</div>
<div class="t" style="left:1361.50px;top:872.85px;font-size:14.3px;font-weight:400;color:#2f2f40;">Guest</div>
<div class="t" style="left:1361.50px;top:892.79px;font-size:12.6px;font-weight:400;color:#3b3b4b;">2 weeks ago</div>
<div style="position:absolute;left:1608px;top:870px;width:248px;height:38px;background:#fff;border:1px solid #c8c8c8;border-radius:4px"></div>
<div style="position:absolute;left:1810px;top:870px;width:1px;height:40px;background:#c8c8c8"></div>
<div class="t" style="left:1649.50px;width:120px;text-align:center;top:882.10px;font-size:14px;font-weight:700;color:#6b6b6b;">Sign</div>
<svg style="position:absolute;left:1828px;top:886px;" width="12" height="8" viewBox="0 0 12 8"><polygon points="0.5,0.8 11.3,0.8 5.9,6.9" fill="#666"/></svg>
<div style="position:absolute;left:233px;top:270px;width:1650px;height:100px;border:4px solid #00a0ff;border-radius:3px"></div>
<div style="position:absolute;left:1894px;top:284px;width:9px;height:239px;background:#bfbfbf;border:1px solid #acacac;border-right:0"></div>
<div style="position:absolute;left:215px;top:902px;width:1689px;height:49px;background:#f9f9f9;border-top:1px solid #e6e6e6"></div>
<div class="t" style="left:239.50px;top:919.67px;font-size:14.5px;font-weight:400;color:#777;">Circularo powered by Karel &copy; 2025</div>
<svg style="position:absolute;left:1850px;top:916px;" width="20" height="20" viewBox="0 0 20 20"><circle cx="10" cy="10" r="8.6" fill="none" stroke="#666" stroke-width="1.3"/><path d="M7.6 8 Q7.6 5.6 10 5.6 Q12.4 5.6 12.4 7.8 Q12.4 9.3 10.8 10.2 Q10 10.7 10 12" fill="none" stroke="#666" stroke-width="1.2" stroke-linecap="round"/><circle cx="10" cy="14.2" r="0.8" fill="#666"/></svg>
</body></html>
